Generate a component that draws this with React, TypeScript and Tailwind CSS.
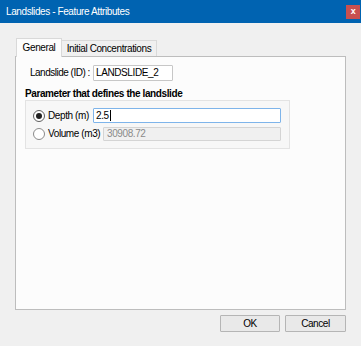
export default function App() {
  return (
    <div className="flex h-[346px] w-[361px] flex-col whitespace-nowrap bg-[#f0f0f0] text-[10px] leading-[12px] tracking-[-0.4px] text-black [font-family:'Liberation_Sans',Arial,sans-serif]">
      {/* title bar */}
      <div className="flex h-[23px] items-center bg-[#0063b1] pl-[6px] pr-[1px] text-white">
        <span>Landslides - Feature Attributes</span>
        <div className="ml-auto flex h-[14px] w-[14px] items-center justify-center bg-[#c75050] pb-px text-[9px] font-bold leading-none text-white">
          x
        </div>
      </div>

      <div className="flex flex-1 flex-col pl-[15px] pr-[15px] pt-[15px]">
        {/* tabs */}
        <div className="flex h-[18px] items-end pl-[1px]">
          <div className="z-10 -mb-px flex h-[19px] w-[46px] items-center justify-center border border-b-0 border-[#d9d9d9] bg-[#fcfcfc]">
            General
          </div>
          <div className="flex h-[16px] w-[95px] items-center justify-center border border-b-0 border-l-0 border-[#d9d9d9] bg-[#f0f0f0]">
            Initial Concentrations
          </div>
        </div>

        {/* pane */}
        <div className="flex h-[254px] flex-col border border-[#bdbdbd] bg-[#fcfcfc] pt-[8px]">
          <div className="flex h-[16px] items-center pl-[14px]">
            <span className="w-[63px] tracking-[-0.5px]">Landslide (ID) :</span>
            <div className="flex h-[16px] w-[80px] items-center rounded-[1px] border border-[#c7c7c7] bg-white pl-[2px]">
              LANDSLIDE_2
            </div>
          </div>

          <div className="mt-[7px] pl-[9px] font-bold">Parameter that defines the landslide</div>

          <div className="ml-[9px] flex h-[49px] w-[265px] flex-col gap-[3px] border border-[#e3e3e3] bg-[#f7f7f7] pl-[7px] pt-[7px]">
            <div className="flex h-[15px] items-center">
              <div className="flex h-[12px] w-[12px] items-center justify-center rounded-full border border-[#5f5f5f] bg-white">
                <div className="h-[6px] w-[6px] rounded-full bg-[#222]" />
              </div>
              <span className="ml-[3px] w-[45px]">Depth (m)</span>
              <div className="flex h-[15px] w-[188px] items-center rounded-[1px] border border-[#7eb4ea] bg-white pl-[2px]">
                2.5<span className="ml-px h-[11px] w-px bg-black" />
              </div>
            </div>
            <div className="flex h-[15px] items-center">
              <div className="h-[12px] w-[12px] rounded-full border border-[#8a8a8a] bg-white" />
              <span className="ml-[3px] w-[55px]">Volume (m3)</span>
              <div className="flex h-[14px] w-[178px] items-center rounded-[1px] border border-[#d4d4d4] bg-[#f0f0f0] pl-[3px] text-[#8a8a8a]">
                30908.72
              </div>
            </div>
          </div>
        </div>

        {/* buttons */}
        <div className="mt-[5px] flex justify-end gap-[5px]">
          <div className="flex h-[17px] w-[60px] items-center justify-center rounded-[1px] border border-[#b5b5b5] bg-[#e9e9e9]">
            OK
          </div>
          <div className="flex h-[17px] w-[61px] items-center justify-center rounded-[1px] border border-[#b5b5b5] bg-[#e9e9e9]">
            Cancel
          </div>
        </div>
      </div>
    </div>
  );
}
